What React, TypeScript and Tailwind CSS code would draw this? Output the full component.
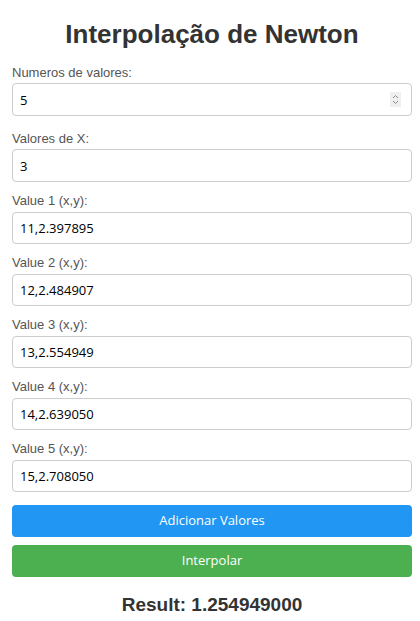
import { useState } from "react";

const sans = { fontFamily: '"Liberation Sans", Arial, sans-serif' };

const points = [
  "11,2.397895",
  "12,2.484907",
  "13,2.554949",
  "14,2.639050",
  "15,2.708050",
];

function Field({ value, spin }: { value: string; spin?: boolean }) {
  return (
    <div className="relative">
      <input
        readOnly
        value={value}
        className="block w-full h-[33px] rounded-[4px] border border-[#cccccc] bg-white pl-[7px] text-[13px] text-black outline-none font-['Open_Sans',sans-serif]"
      />
      {spin && (
        <div className="absolute right-[11px] top-[9px] w-[11px] h-[15px] bg-[#efefef] flex items-center justify-center">
          <svg width="7" height="11" viewBox="0 0 7 11" fill="none" stroke="#8a8a8a" strokeWidth="1">
            <path d="M1 4 L3.5 1.5 L6 4" />
            <path d="M1 7 L3.5 9.5 L6 7" />
          </svg>
        </div>
      )}
    </div>
  );
}

export default function App() {
  const [count] = useState("5");

  return (
    <div className="bg-white min-h-[621px] pl-3 pr-2" style={sans}>
      <h1 className="pt-[19px] text-center text-[26px] leading-[30px] font-bold text-[#333333]">
        Interpolação de Newton
      </h1>

      <label className="block mt-4 text-[13px] leading-[15px] text-[#555555]">Numeros de valores:</label>
      <div className="mt-[3px]">
        <Field value={count} spin />
      </div>

      <label className="block mt-[15px] text-[13px] leading-[15px] text-[#555555]">Valores de X:</label>
      <div className="mt-[3px]">
        <Field value="3" />
      </div>

      {points.map((p, i) => (
        <div key={i} className="mt-[11px]">
          <label className="block text-[13px] leading-[15px] text-[#555555]">Value {i + 1} (x,y):</label>
          <div className="mt-[4px]">
            <div className="[&_input]:h-[32px]">
              <Field value={p} />
            </div>
          </div>
        </div>
      ))}

      <button className="mt-[13px] block w-full h-[32px] rounded-[4px] bg-[#2196f3] text-white text-[13px] font-['Open_Sans',sans-serif]">
        Adicionar Valores
      </button>
      <button className="mt-2 block w-full h-[32px] rounded-[4px] bg-[#4caf50] text-white text-[13px] font-['Open_Sans',sans-serif]">
        Interpolar
      </button>

      <p className="mt-[17px] text-center text-[19px] leading-[22px] font-bold text-[#333333]">
        Result: 1.254949000
      </p>
    </div>
  );
}
